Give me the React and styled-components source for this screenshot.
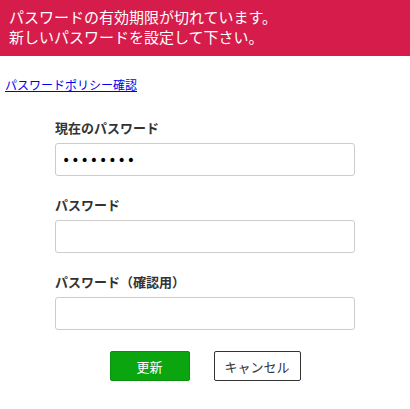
import React from 'react';
import styled, { createGlobalStyle } from 'styled-components';

const GlobalStyle = createGlobalStyle`
    body {
        margin: 0;
        background: #fff;
        font-family: "Noto Sans CJK JP", "Noto Sans", sans-serif;
    }
`;

const Alert = styled.div`
    background: #d51c4b;
    color: #fff;
    font-size: 15px;
    line-height: 20px;
    padding: 7px 9px 9px;
`;

const PolicyLink = styled.a`
    display: inline-block;
    margin: 20px 0 0 5px;
    font-size: 12px;
    line-height: 18px;
    color: #0000ee;
    text-decoration: underline;
`;

const Form = styled.form`
    width: 300px;
    margin: 24px 0 0 55px;
    display: flex;
    flex-direction: column;
`;

const Field = styled.div`
    display: flex;
    flex-direction: column;
    margin-bottom: 20px;
`;

const Label = styled.label`
    font-size: 13px;
    line-height: 18px;
    font-weight: bold;
    color: #333;
    margin-bottom: 6px;
`;

const Input = styled.input`
    box-sizing: border-box;
    width: 300px;
    height: 33px;
    border: 1px solid #ccc;
    border-radius: 3px;
    padding: 0 6px;
    font-size: 14px;
    font-family: "DejaVu Sans", sans-serif;
    letter-spacing: 1px;
    color: #000;
    outline: none;
`;

const Actions = styled.div`
    display: flex;
    justify-content: center;
    gap: 24px;
    margin-top: 1px;
`;

const Button = styled.button`
    box-sizing: border-box;
    height: 30px;
    font-size: 13px;
    font-family: "Noto Sans CJK JP", sans-serif;
    border-radius: 2px;
    cursor: pointer;
    width: ${(props) => (props.primary ? '80px' : '87px')};
    background: ${(props) => (props.primary ? '#0ba50f' : '#fff')};
    color: ${(props) => (props.primary ? '#fff' : '#333')};
    border: 1px solid ${(props) => (props.primary ? '#0b8f0e' : '#333')};
`;

const App = () => {
    return (
        <>
            <GlobalStyle />
            <Alert>
                パスワードの有効期限が切れています。
                <br />
                新しいパスワードを設定して下さい。
            </Alert>
            <PolicyLink href="#">パスワードポリシー確認</PolicyLink>
            <Form onSubmit={(e) => e.preventDefault()}>
                <Field>
                    <Label>現在のパスワード</Label>
                    <Input type="password" defaultValue="12345678" />
                </Field>
                <Field>
                    <Label>パスワード</Label>
                    <Input type="password" />
                </Field>
                <Field>
                    <Label>パスワード（確認用）</Label>
                    <Input type="password" />
                </Field>
                <Actions>
                    <Button primary type="submit">更新</Button>
                    <Button type="button">キャンセル</Button>
                </Actions>
            </Form>
        </>
    );
};

export default App;
